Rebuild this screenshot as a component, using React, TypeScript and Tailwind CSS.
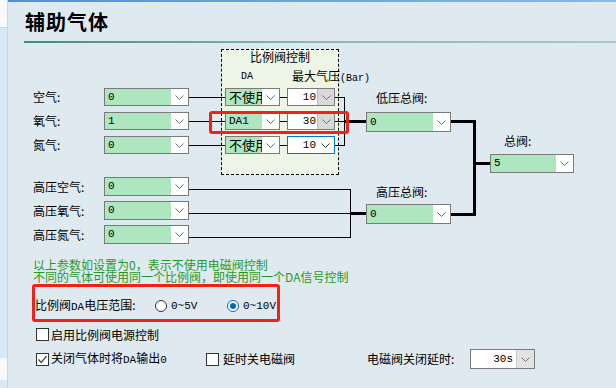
import React from "react";

type LowRow = { label: string; value: string; da: string; bar: string; focus?: boolean };

const lowRows: LowRow[] = [
  { label: "空气:", value: "0", da: "不使用", bar: "10" },
  { label: "氧气:", value: "1", da: "DA1", bar: "30" },
  { label: "氮气:", value: "0", da: "不使用", bar: "10", focus: true },
];

const highRows = [
  { label: "高压空气:", value: "0" },
  { label: "高压氧气:", value: "0" },
  { label: "高压氮气:", value: "0" },
];

function Chevron({ dark }: { dark?: boolean }) {
  return (
    <svg width="9" height="5" viewBox="0 0 9 5">
      <path d="M0.5 0.5 L4.5 4.5 L8.5 0.5" fill="none" stroke={dark ? "#333" : "#707070"} strokeWidth="1" />
    </svg>
  );
}

// green combo used for all valve numbers
function GreenCombo({ value, className, mono }: { value: string; className: string; mono?: boolean }) {
  return (
    <div className={`flex shrink-0 border border-[#7a7a7a] bg-white ${className}`}>
      <div
        className={`flex flex-1 items-center overflow-hidden whitespace-nowrap bg-[#aee6c0] pl-[3px] ${
          mono ? "font-['Liberation_Mono',monospace] text-[11px]" : "text-[13px]"
        }`}
      >
        {value}
      </div>
      <div className="flex w-[17px] items-center justify-center">
        <Chevron />
      </div>
    </div>
  );
}

function BarCombo({ value, focus }: { value: string; focus?: boolean }) {
  return (
    <div
      className={`flex h-[18px] w-[48px] shrink-0 border bg-white ${
        focus ? "border-[#0078d7]" : "border-[#7a7a7a]"
      }`}
    >
      <div className="flex flex-1 items-center justify-end pr-[1px] font-['Liberation_Mono',monospace] text-[11px]">
        {value}
      </div>
      <div
        className={`flex w-[17px] items-center justify-center ${
          focus ? "bg-white" : "border-l border-[#bdbdbd] bg-[#d9d9d9]"
        }`}
      >
        <Chevron dark={focus} />
      </div>
    </div>
  );
}

function Check({ on }: { on?: boolean }) {
  return (
    <span className="flex h-[13px] w-[13px] shrink-0 items-center justify-center border border-[#333] bg-white">
      {on && (
        <svg width="11" height="11" viewBox="0 0 11 11">
          <path d="M1.5 5.5 L4.3 8.5 L9.5 2" fill="none" stroke="#4a4a4a" strokeWidth="1.3" />
        </svg>
      )}
    </span>
  );
}

function Radio({ on }: { on?: boolean }) {
  return (
    <span
      className={`flex h-[12px] w-[12px] shrink-0 items-center justify-center rounded-full border bg-white ${
        on ? "border-[#0067c0]" : "border-[#333]"
      }`}
    >
      {on && <span className="h-[6px] w-[6px] rounded-full bg-[#0067c0]" />}
    </span>
  );
}

function Wire({ className }: { className: string }) {
  return <div className={`h-px shrink-0 bg-black ${className}`} />;
}

function Diagram() {
  return (
    <div className="relative isolate mt-[1px] pt-[44px]">
      {/* 比例阀控制 group frame */}
      <div className="absolute left-[213px] top-[5px] -z-10 h-[126px] w-[118px] border border-dashed border-black bg-[#edf6e6]">
        <div className="text-center leading-[14px]">比例阀控制</div>
        <div className="mt-[5px] flex h-[14px] items-center whitespace-nowrap">
          <span className="ml-[19px] font-['Liberation_Mono',monospace] text-[10px]">DA</span>
          <span className="ml-[39px]">
            最大气压<span className="font-['Liberation_Mono',monospace] text-[10px]">(Bar)</span>
          </span>
        </div>
      </div>

      {/* joining wires */}
      <svg className="absolute left-0 top-0 -z-10" width="608" height="210" viewBox="8 44 608 210" shapeRendering="crispEdges">
        <rect x="344" y="97" width="1" height="49" fill="#000" />
        <rect x="344" y="120" width="22" height="3" fill="#000" />
        <rect x="350" y="189" width="1" height="49" fill="#000" />
        <rect x="350" y="212" width="16" height="3" fill="#000" />
        <rect x="451" y="120" width="25" height="3" fill="#000" />
        <rect x="473" y="120" width="3" height="96" fill="#000" />
        <rect x="451" y="213" width="25" height="3" fill="#000" />
        <rect x="473" y="162" width="17" height="3" fill="#000" />
      </svg>

      <div className="flex flex-col gap-[5px]">
        {lowRows.map((r) => (
          <div key={r.label} className="flex h-[19px] items-start">
            <div className="ml-[25px] w-[71px] shrink-0 leading-[18px]">{r.label}</div>
            <GreenCombo value={r.value} className="h-[18px] w-[85px]" mono />
            <Wire className="mt-[9px] w-[36px]" />
            <GreenCombo value={r.da} className="h-[18px] w-[55px]" mono={r.da === "DA1"} />
            <Wire className="mt-[9px] w-[7px]" />
            <BarCombo value={r.bar} focus={r.focus} />
            <Wire className="mt-[9px] w-[10px]" />
          </div>
        ))}
      </div>

      <div className="mt-[22px] flex flex-col gap-[5px]">
        {highRows.map((r) => (
          <div key={r.label} className="flex h-[19px] items-start">
            <div className="ml-[25px] w-[71px] shrink-0 leading-[19px]">{r.label}</div>
            <GreenCombo value={r.value} className="h-[19px] w-[85px]" mono />
            <Wire className="mt-[12px] w-[162px]" />
          </div>
        ))}
      </div>

      <div className="absolute left-[358px] top-[47px] flex flex-col gap-[7px]">
        <div className="ml-[10px] leading-[14px]">低压总阀:</div>
        <GreenCombo value="0" className="h-[20px] w-[85px]" mono />
      </div>
      <div className="absolute left-[482px] top-[90px] flex flex-col gap-[6px]">
        <div className="ml-[14px] leading-[14px]">总阀:</div>
        <GreenCombo value="5" className="h-[19px] w-[84px]" mono />
      </div>
      <div className="absolute left-[358px] top-[141px] flex flex-col gap-[5px]">
        <div className="ml-[10px] leading-[14px]">高压总阀:</div>
        <GreenCombo value="0" className="h-[20px] w-[85px]" mono />
      </div>

      <div className="absolute left-[201px] top-[67px] h-[23px] w-[140px] rounded-[3px] border-[3px] border-[#f0201a]" />
    </div>
  );
}

export default function App() {
  return (
    <div className="flex h-[388px] w-[616px] overflow-hidden font-['Noto_Sans_CJK_SC',sans-serif] text-[12px] text-black">
      <div className="flex w-[8px] shrink-0 flex-col border-r border-[#c5d6e6]">
        <div className="h-[28px] border-b border-[#cbd9e7] bg-[#f7f9fc]" />
        <div className="h-[330px] bg-[#d9e8f7]" />
        <div className="h-[22px] bg-[#f7f9fc]" />
        <div className="flex-1 bg-[#d9e8f7]" />
      </div>

      <div className="flex-1 bg-[#dfeaf0]">
        <div className="h-[2px] bg-linear-to-r from-[#4c92da] to-[#86bbe8]" />
        <div className="h-[39px] pl-[17px] pt-[6px]">
          <h1 className="text-[20px] font-bold leading-[28px] tracking-[1px]">辅助气体</h1>
        </div>
        <div className="ml-[16px] h-[2px] bg-linear-to-r from-[#3e8a88] via-[#8fb5c2] to-[#a9c6d2]" />

        <Diagram />

        <div className="ml-[25px] mt-[15px] whitespace-nowrap leading-[12px] text-[#1f9a1f]">
          <div>以上参数如设置为0，表示不使用电磁阀控制</div>
          <div>不同的气体可使用同一个比例阀，即使用同一个DA信号控制</div>
        </div>

        <div className="ml-[24px] mt-[1px] flex h-[38px] w-[248px] items-center rounded-[3px] border-[3px] border-[#f0201a] pt-[6px]">
          <div className="w-[120px] shrink-0">
            比例阀<span className="font-['Liberation_Mono',monospace] text-[11px]">DA</span>电压范围:
          </div>
          <div className="flex w-[72px] shrink-0 items-center gap-[4px]">
            <Radio />
            <span className="font-['Liberation_Mono',monospace] text-[11px]">0~5V</span>
          </div>
          <div className="flex items-center gap-[4px]">
            <Radio on />
            <span className="font-['Liberation_Mono',monospace] text-[11px]">0~10V</span>
          </div>
        </div>

        <div className="ml-[28px] mt-[6px] flex h-[13px] items-center gap-[2px]">
          <Check />
          <span>启用比例阀电源控制</span>
        </div>

        <div className="ml-[28px] mt-[8px] flex h-[20px] items-center">
          <div className="flex w-[170px] shrink-0 items-center gap-[2px]">
            <Check on />
            <span>
              关闭气体时将<span className="font-['Liberation_Mono',monospace] text-[11px]">DA</span>输出
              <span className="font-['Liberation_Mono',monospace] text-[11px]">0</span>
            </span>
          </div>
          <div className="flex w-[161px] shrink-0 items-center gap-[4px]">
            <Check />
            <span>延时关电磁阀</span>
          </div>
          <div className="w-[103px] shrink-0">电磁阀关闭延时:</div>
          <div className="flex h-[20px] w-[65px] shrink-0 border border-[#7a7a7a] bg-white">
            <div className="flex flex-1 items-center justify-end pr-[3px] font-['Liberation_Mono',monospace] text-[11px]">
              30s
            </div>
            <div className="flex w-[18px] items-center justify-center border-l border-[#c8c8c8] bg-[#e3e3e3]">
              <Chevron />
            </div>
          </div>
        </div>
      </div>
    </div>
  );
}
